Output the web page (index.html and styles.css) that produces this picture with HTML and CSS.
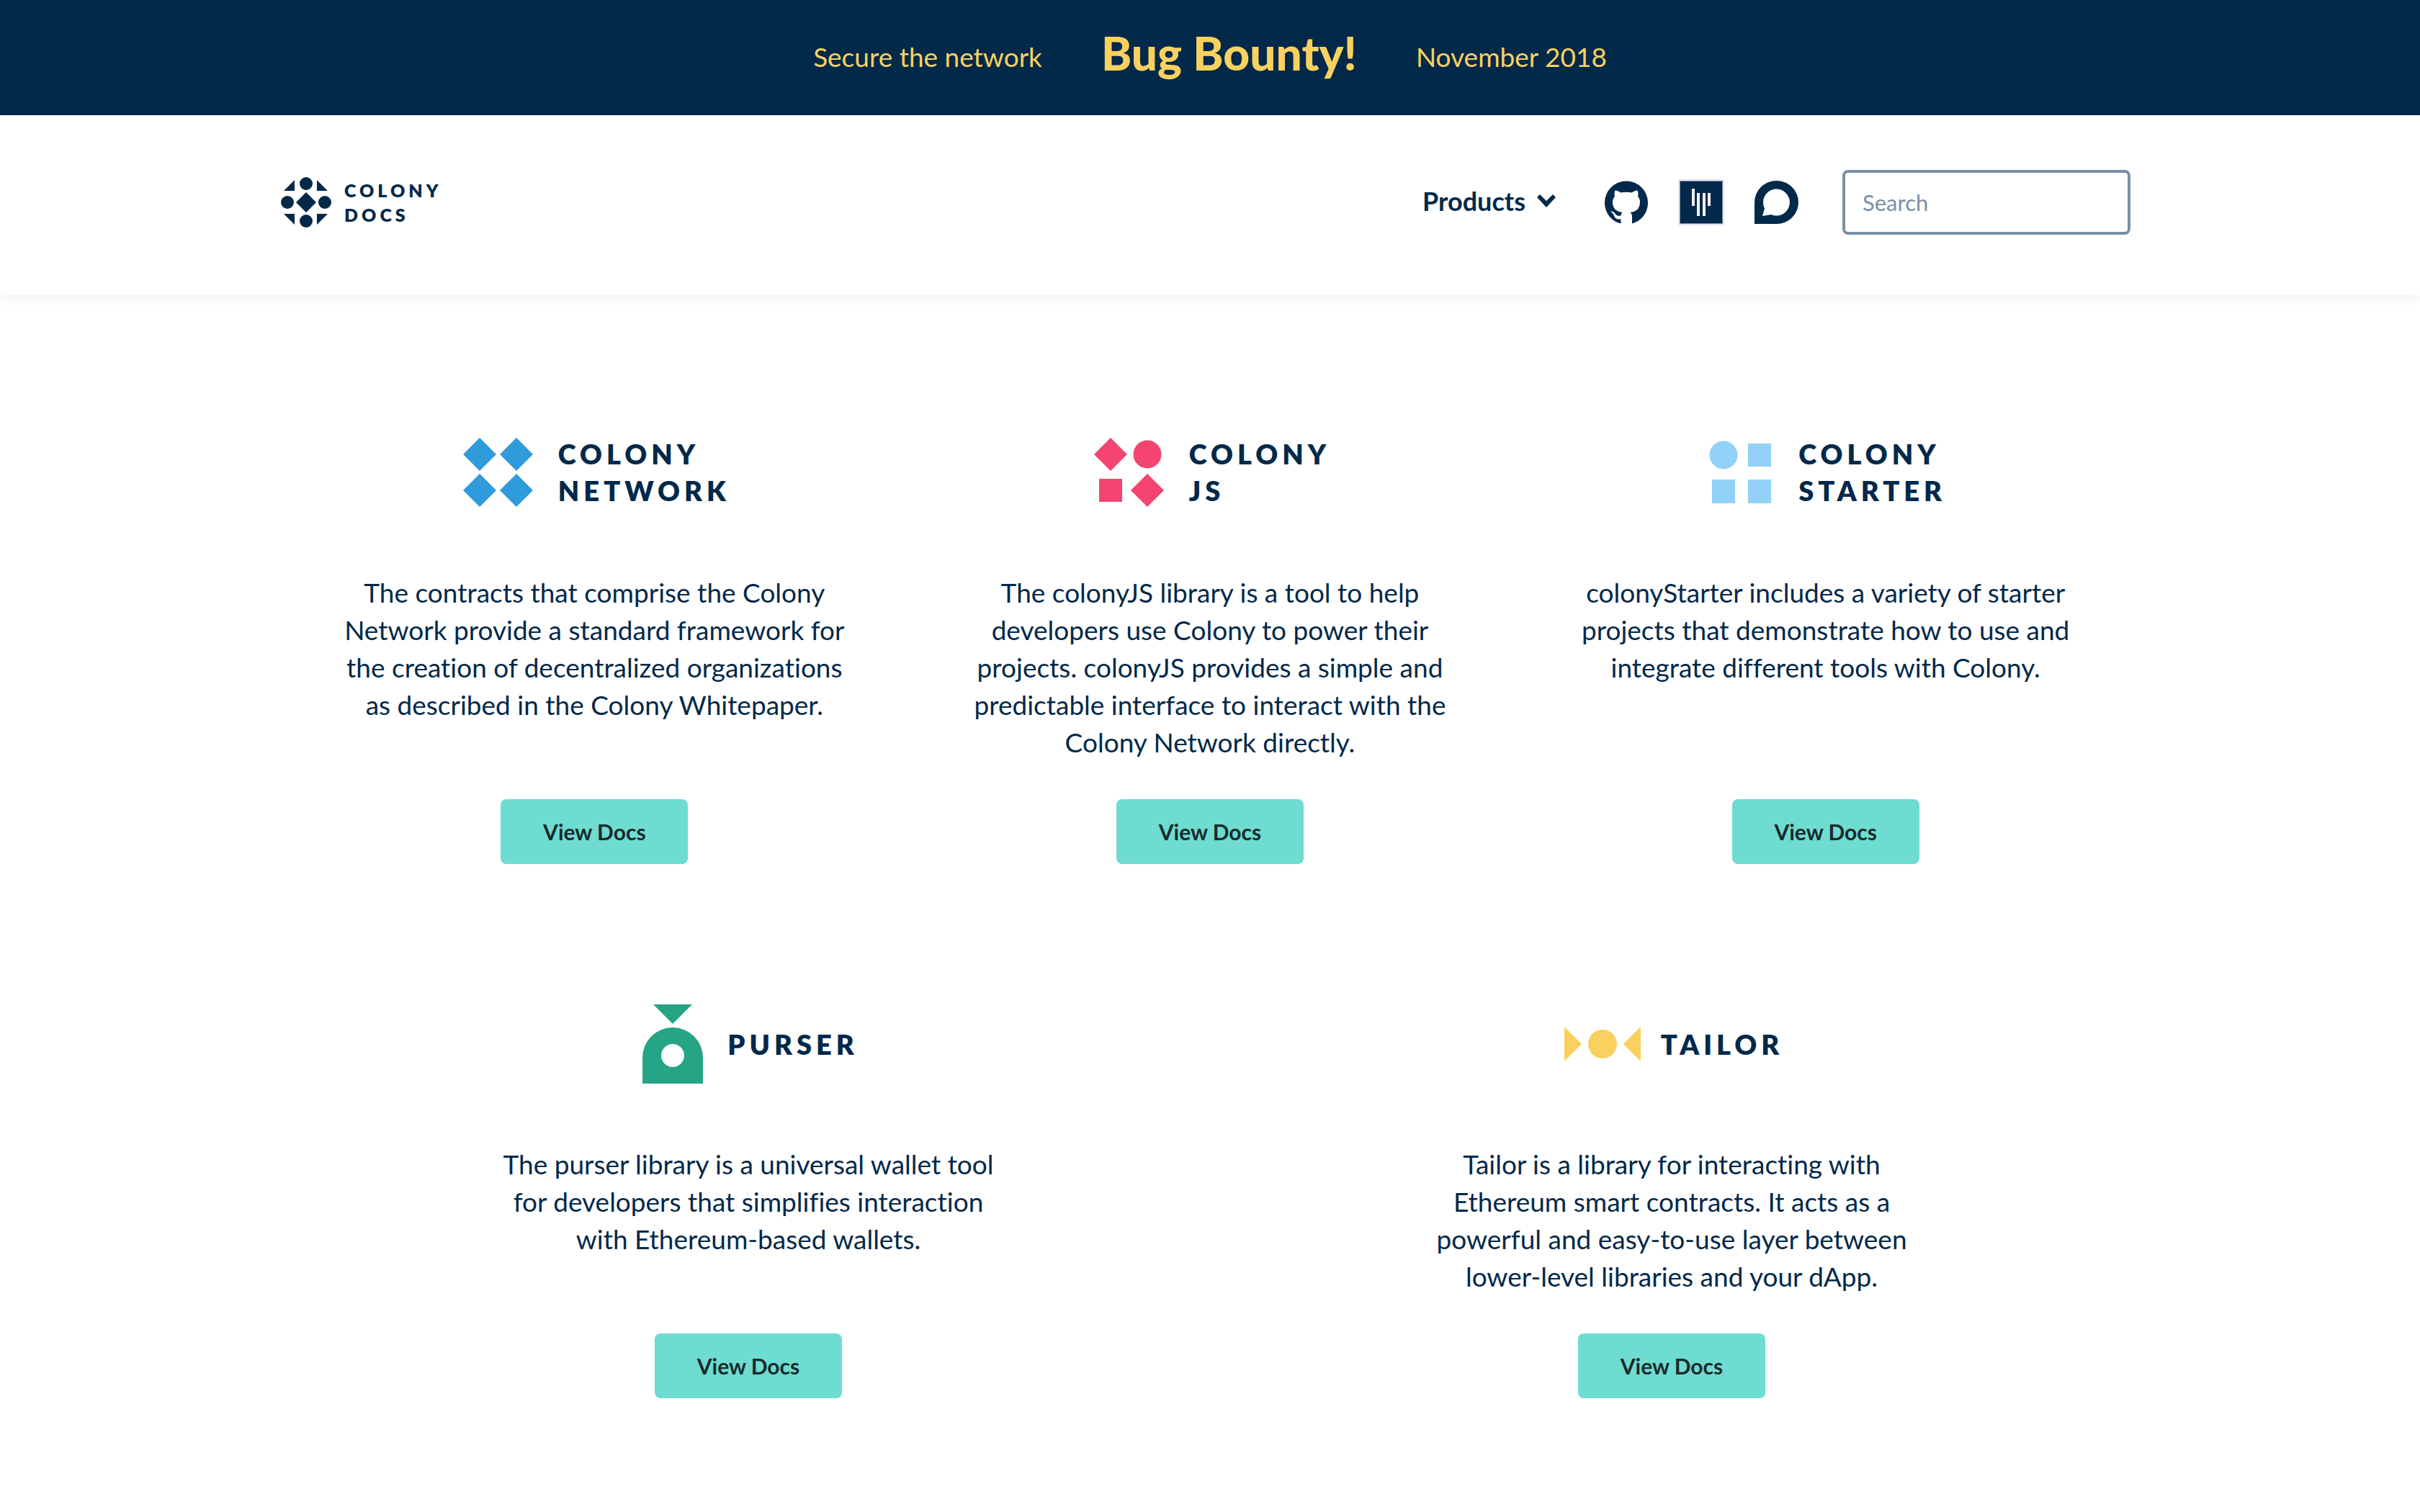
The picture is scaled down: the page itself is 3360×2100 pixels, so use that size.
FILE: index.html
```html
<!DOCTYPE html>
<html lang="en">
<head>
  <meta charset="utf-8">
  <meta name="viewport" content="width=device-width, initial-scale=1">
  <title>Colony Docs</title>
  <link rel="stylesheet" href="styles.css">
</head>
<body>
  <a class="banner" href="#bounty">
    <span class="banner-note">Secure the network</span>
    <strong class="banner-title">Bug Bounty!</strong>
    <span class="banner-note">November 2018</span>
  </a>

  <header class="header">
    <div class="header-inner">
      <a class="logo" href="#home">
        <svg class="logo-mark" width="70" height="70" viewBox="0 0 70 70" aria-hidden="true">
          <circle cx="35" cy="9" r="9"/>
          <circle cx="9" cy="35" r="9"/>
          <circle cx="61" cy="35" r="9"/>
          <circle cx="35" cy="61" r="9"/>
          <path d="M35 21l14 14-14 14-14-14zM19 4v15H4zM50 4v15h15zM19 66V51H4zM50 66V51h15z"/>
        </svg>
        <span class="logo-name"><span>COLONY</span><span>DOCS</span></span>
      </a>

      <nav class="nav" aria-label="Main">
        <button class="products" type="button">Products
          <svg width="26" height="18" viewBox="0 0 26 18" aria-hidden="true"><path d="M4 0l9 9 9-9 4 4-13 14L0 4z"/></svg>
        </button>
        <a class="social" href="#github" aria-label="GitHub">
          <svg width="60" height="60" viewBox="0 0 60 60" aria-hidden="true">
            <path d="M22.500 59.500C9.500 56.500 0 44.500 0 30.500A30 30 0 0 1 60 30.500C60 44.500 51 56 38 59.500V50C38 47 37 45 35.500 44C43 43 49 39.500 49 29.500C49 26.500 48 24 46 22C47 19 46.500 16 45.500 13.500C42.500 13.500 40 15 37.500 16.500C32.500 15.500 27.500 15.500 22.500 16.500C20 15 17.500 13.500 14.500 13.500C13.500 16 13 19 14 22C12 24 11 26.500 11 29.500C11 39.500 17 43 24.500 44C23.500 45 22.800 46.500 22.600 48.200C18.500 49.500 16 48.500 14 45C12.500 43 10.500 42.500 8.500 42.700C8 43.200 9 43.700 10 44.300C12 45.800 12.700 48 13.500 49.800C15 53.300 18.500 54 22.500 53.300Z"/>
          </svg>
        </a>
        <a class="social social-framed" href="#gitter" aria-label="Gitter">
          <svg width="60" height="60" viewBox="0 0 60 60" aria-hidden="true">
            <path d="M0 0h60v60H0z"/>
            <path class="edge" d="M.5.5h59v59H.5z"/>
            <path class="bars" d="M17 11h4v24h-4zM24 17h4v32h-4zM32 17h4v32h-4zM39 17h4v18h-4z"/>
          </svg>
        </a>
        <a class="social" href="#forum" aria-label="Forum">
          <svg width="62" height="60" viewBox="0 0 62 60" aria-hidden="true">
            <path fill-rule="evenodd" d="M0 60V30A30.500 30 0 1 1 30.500 60ZM11 49L23 47A18.500 18.500 0 1 0 14 38.500Z"/>
          </svg>
        </a>
        <input class="search" type="search" placeholder="Search" aria-label="Search">
      </nav>
    </div>
  </header>

  <main class="projects">
    <div class="row row-three">
      <section class="project">
        <h2 class="project-title">
          <svg class="blue" width="98" height="96" viewBox="0 0 98 96" aria-hidden="true">
            <path d="M23 0l23 23-23 23L0 23zM74 0l23 23-23 23-23-23zM23 50l23 23-23 23L0 73zM74 50l23 23-23 23-23-23z"/>
          </svg>
          <span class="wordmark gap-wide"><span>COLONY</span><span>NETWORK</span></span>
        </h2>
        <p class="project-text">The contracts that comprise the Colony Network provide a standard framework for the creation of decentralized organizations as described in the Colony Whitepaper.</p>
        <a class="button" href="#network">View Docs</a>
      </section>
      <section class="project">
        <h2 class="project-title">
          <svg class="pink" width="98" height="96" viewBox="0 0 98 96" aria-hidden="true">
            <path d="M23 0l23 23-23 23L0 23zM74 50l23 23-23 23-23-23zM7 57h32v32H7z"/>
            <circle cx="74" cy="23" r="19.500"/>
          </svg>
          <span class="wordmark gap-wide"><span>COLONY</span><span>JS</span></span>
        </h2>
        <p class="project-text">The colonyJS library is a tool to help developers use Colony to power their projects. colonyJS provides a simple and predictable interface to interact with the Colony Network directly.</p>
        <a class="button" href="#js">View Docs</a>
      </section>
      <section class="project">
        <h2 class="project-title">
          <svg class="sky" width="90" height="96" viewBox="0 0 90 96" aria-hidden="true">
            <circle cx="20" cy="24" r="19.500"/>
            <path d="M54 8h32v32H54zM4 58h32v33H4zM54 58h32v33H54z"/>
          </svg>
          <span class="wordmark gap-wide"><span>COLONY</span><span>STARTER</span></span>
        </h2>
        <p class="project-text">colonyStarter includes a variety of starter projects that demonstrate how to use and integrate different tools with Colony.</p>
        <a class="button" href="#starter">View Docs</a>
      </section>
    </div>

    <div class="row row-two">
      <section class="project">
        <h2 class="project-title">
          <svg class="green" width="84" height="110" viewBox="0 0 84 110" aria-hidden="true">
            <path d="M15 0h54L42 27z"/>
            <path fill-rule="evenodd" d="M0 110V74a42 42 0 0 1 84 0v36zM42 55a16 16 0 1 0 0 32 16 16 0 0 0 0-32z"/>
          </svg>
          <span class="wordmark gap-wide"><span>PURSER</span></span>
        </h2>
        <p class="project-text">The purser library is a universal wallet tool for developers that simplifies interaction with Ethereum-based wallets.</p>
        <a class="button" href="#purser">View Docs</a>
      </section>
      <section class="project">
        <h2 class="project-title">
          <svg class="yellow" width="106" height="48" viewBox="0 0 106 48" aria-hidden="true">
            <path d="M0 0l24 24L0 48zM106 0L82 24l24 24z"/>
            <circle cx="53" cy="24" r="20"/>
          </svg>
          <span class="wordmark"><span>TAILOR</span></span>
        </h2>
        <p class="project-text">Tailor is a library for interacting with Ethereum smart contracts. It acts as a powerful and easy-to-use layer between lower-level libraries and your dApp.</p>
        <a class="button" href="#tailor">View Docs</a>
      </section>
    </div>
  </main>
</body>
</html>
```
FILE: styles.css
```css
:root {
  --navy: #02294a;
  --yellow: #fad15f;
  --slate: #7a8fa6;
  --teal: #6edcd1;
}

* {
  box-sizing: border-box;
}

body {
  margin: 0;
  background: #fff;
  color: var(--navy);
  font-family: Lato, "Open Sans", sans-serif;
  font-size: 37px;
  font-variant-ligatures: none;
  line-height: 52px;
}

a {
  color: inherit;
  text-decoration: none;
}

svg {
  display: block;
  flex: none;
  fill: currentColor;
}

/* Announcement banner */
.banner {
  display: flex;
  justify-content: center;
  align-items: center;
  gap: 82px;
  padding: 34px 40px 46px;
  background: var(--navy);
  color: var(--yellow);
}

.banner-note {
  padding-top: 10px;
}

.banner-title {
  font-size: 64px;
  font-weight: 900;
  line-height: 80px;
}

/* Header */
.header {
  padding: 76px 40px 84px;
  box-shadow: 0 6px 14px rgba(0, 0, 0, 0.05);
}

.header-inner {
  display: flex;
  justify-content: space-between;
  align-items: center;
  max-width: 2580px;
  margin: 0 auto;
  padding-right: 12px;
}

.logo {
  display: flex;
  align-items: center;
  gap: 18px;
}

.logo-name {
  display: flex;
  flex-direction: column;
  font-size: 25px;
  font-weight: 800;
  line-height: 34px;
  letter-spacing: 5px;
}

.nav {
  display: flex;
  align-items: center;
}

.products {
  display: flex;
  align-items: center;
  gap: 16px;
  margin-right: 68px;
  padding: 0 0 4px;
  border: 0;
  background: none;
  color: inherit;
  font: inherit;
  font-size: 36px;
  font-weight: 700;
}

.social {
  margin-right: 44px;
}

.social-framed {
  margin: 0 42px 0 -2px;
  border: 2px solid #e8e6f8;
}

.edge {
  fill: none;
  stroke: #7a8fa6;
}

.bars {
  fill: #f1f1fb;
}

.search {
  width: 400px;
  height: 90px;
  margin-left: 16px;
  padding: 0 24px;
  border: 4px solid var(--slate);
  border-radius: 8px;
  background: #fff;
  color: var(--navy);
  font: inherit;
  font-size: 31px;
  appearance: none;
}

.search::placeholder {
  color: var(--slate);
  opacity: 1;
}

/* Project grid */
.projects {
  display: grid;
  gap: 194px;
  max-width: 2644px;
  margin: 0 auto;
  padding: 190px 40px 158px;
}

.row {
  display: grid;
}

.row-three {
  grid-template-columns: repeat(3, 1fr);
}

.row-two {
  grid-template-columns: repeat(2, 1fr);
}

.project {
  display: flex;
  flex-direction: column;
  align-items: center;
}

.project-title {
  display: flex;
  align-items: center;
  gap: 28px;
  min-height: 112px;
  margin: 0 0 85px;
}

/* The negative margin drops the tracking after the last letter, so the title centres */
.wordmark {
  display: flex;
  flex-direction: column;
  margin-right: -6px;
  font-size: 38px;
  font-weight: 800;
  line-height: 51px;
  letter-spacing: 6px;
}

.gap-wide {
  padding-left: 6px;
}

.project-text {
  flex: 1;
  max-width: 720px;
  margin: 0 0 53px;
  text-align: center;
}

.button {
  min-width: 260px;
  padding: 19px 40px;
  border-radius: 8px;
  background: var(--teal);
  color: #172b2b;
  font-size: 30px;
  font-weight: 700;
  text-align: center;
}

.blue { color: #309bdb; }
.pink { color: #f3456f; }
.sky { color: #92d1f9; }
.green { color: #25a583; }
.yellow { color: #fad15f; }
```
